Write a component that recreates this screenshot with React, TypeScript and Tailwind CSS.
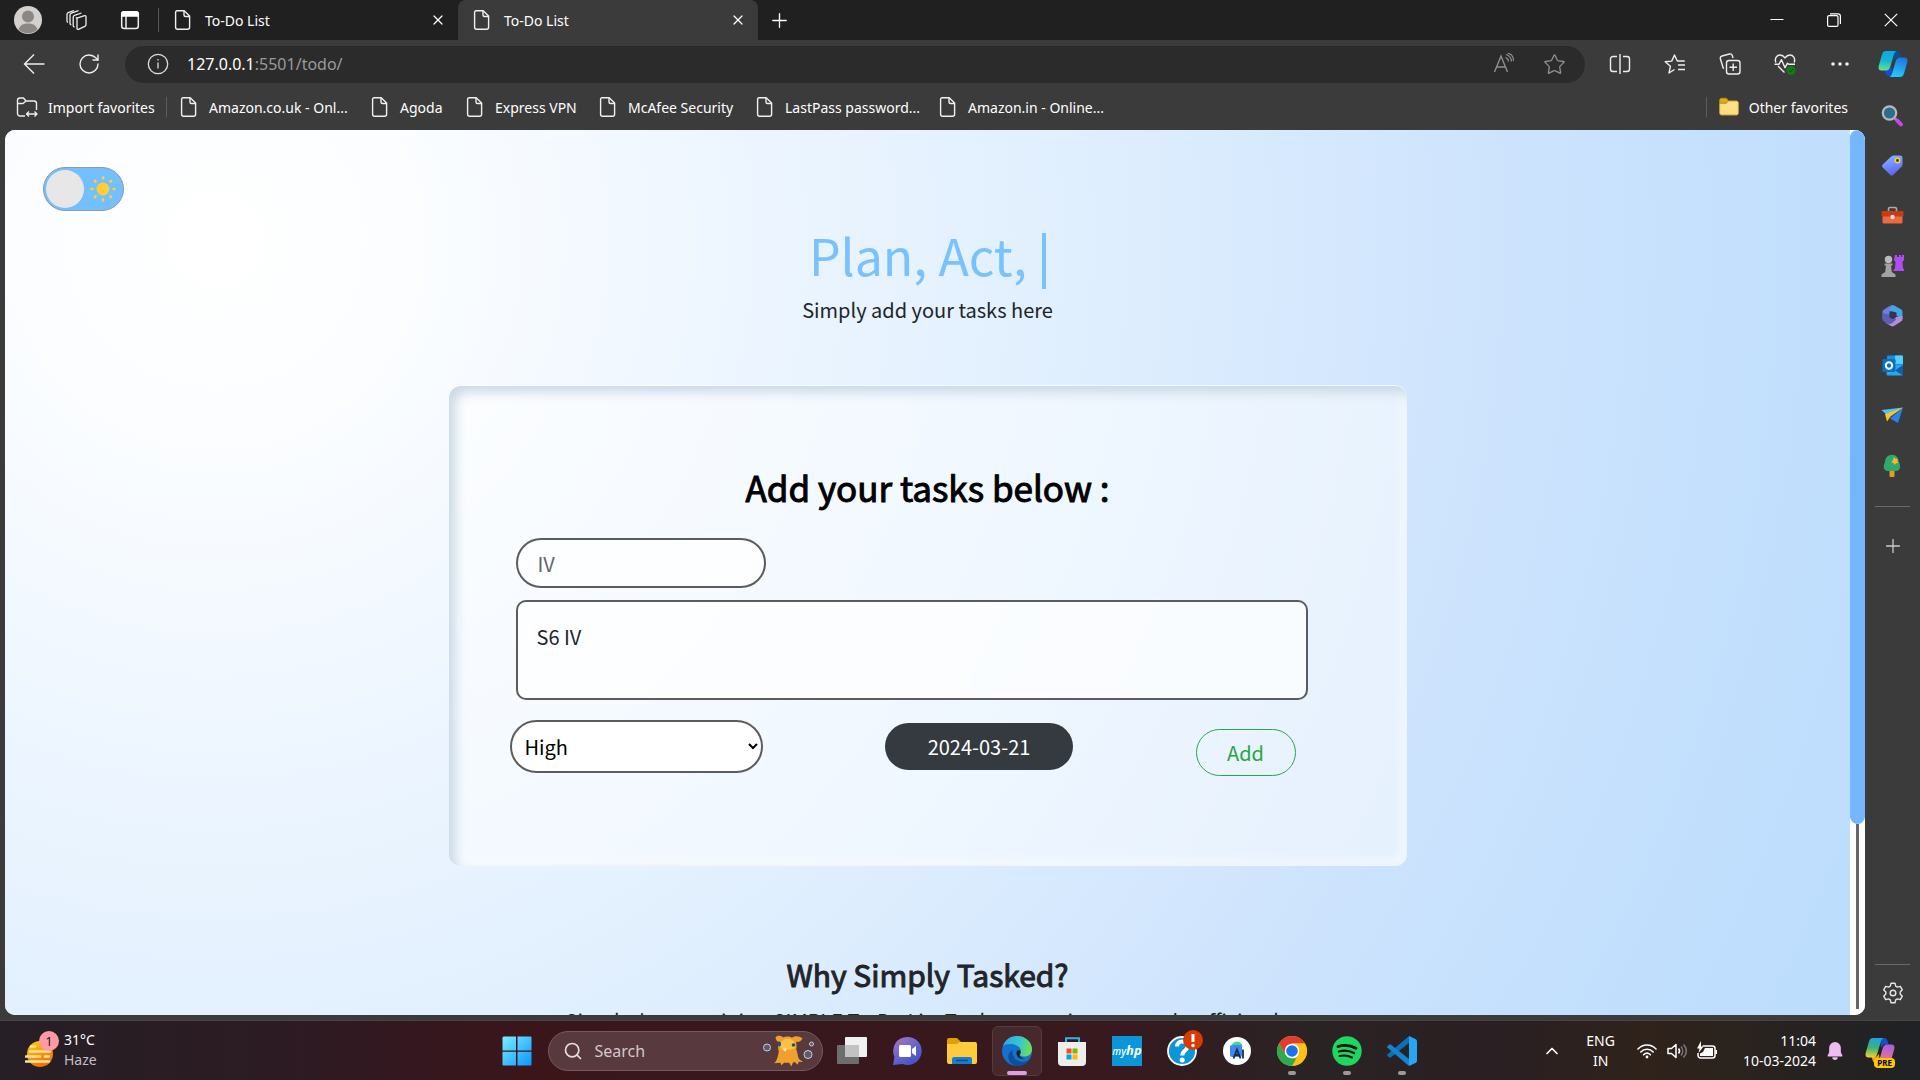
import React from "react";
import {
  ArrowLeft,
  ChevronUp,
  Plus,
  RotateCw,
  Search,
  Star,
  X,
} from "lucide-react";

const svg = (size: number, box = 24) => ({
  width: size,
  height: size,
  viewBox: `0 0 ${box} ${box}`,
  fill: "none",
  "aria-hidden": true,
});

function PageIcon() {
  return (
    <svg {...svg(20, 20)} className="shrink-0" stroke="#f0f0f0" strokeWidth="1.4" strokeLinejoin="round">
      <path d="M4 .8h7.2L16.6 6v11.2a2 2 0 0 1-2 2H4.6a2 2 0 0 1-2-2v-15A1.4 1.4 0 0 1 4 .8Z" />
      <path d="M11 1v4a1.500 1.500 0 0 0 1.500 1.500h4" />
    </svg>
  );
}

/* ---------- tab strip ---------- */

function Tab({ active }: { active?: boolean }) {
  return (
    <div
      className={
        active
          ? "flex h-full w-[300px] items-center rounded-t-lg bg-[#3b3b3b] pl-3.5 pr-2.5"
          : "flex h-full w-[299px] items-center pl-3.5 pr-2.5"
      }
    >
      <PageIcon />
      <span className="ml-3 flex-1 text-[14px]">To-Do List</span>
      <button aria-label="Close tab" className="grid size-5 place-items-center">
        <X size={16} strokeWidth={1.8} />
      </button>
    </div>
  );
}

function TabStrip() {
  return (
    <div className="flex h-10 shrink-0 items-center bg-[#202020] text-white">
      <button aria-label="Profile" className="ml-3.5 shrink-0">
        <svg {...svg(28, 28)}>
          <circle cx="14" cy="14" r="14" fill="#d3d1cf" />
          <circle cx="14" cy="10.500" r="6" fill="#8a8785" />
          <path d="M4.500 23.500C6 19 9.500 17.500 14 17.500s8 1.500 9.500 6A14 14 0 0 1 4.500 23.500Z" fill="#8a8785" />
        </svg>
      </button>
      <button aria-label="Workspaces" className="ml-6 shrink-0">
        <svg {...svg(22, 22)} stroke="#eee" strokeWidth="1.300" strokeLinejoin="round">
          <path d="m11 9.200 7.500-2.500a1 1 0 0 1 1.500 1v7.800a2 2 0 0 1-1.200 1.800l-6.300 3a1 1 0 0 1-1.500-1v-8Z" />
          <path d="M11 9.200 9.800 8.500M8.500 18a1.500 1.500 0 0 1-1.300-1.500V8.300a2 2 0 0 1 1.300-1.900L15.500 4" />
          <path d="M5.300 15.800A1.500 1.500 0 0 1 4 14.300V6a2 2 0 0 1 1.300-1.900L12.500 1.600" />
          <path d="M2 13.500A1.500 1.500 0 0 1 1 12V5.500A2 2 0 0 1 2.200 3.600L8 1.500" />
        </svg>
      </button>
      <button aria-label="Tab actions" className="ml-8 shrink-0">
        <svg {...svg(20, 20)}>
          <rect x="1.700" y="2" width="16.600" height="16.400" rx="2.500" stroke="#eee" strokeWidth="1.500" />
          <path d="M1 6.800V4a3 3 0 0 1 3-3h12a3 3 0 0 1 3 3v2.800Z" fill="#fff" />
          <path d="M6 6v12" stroke="#eee" strokeWidth="1.500" />
        </svg>
      </button>
      <span className="ml-[18px] h-6 w-px bg-[#5a5a5a]" />
      <Tab />
      <Tab active />
      <button aria-label="New tab" className="ml-2.5">
        <Plus size={23} strokeWidth={1.4} />
      </button>
      <div className="ml-auto flex h-full">
        <button aria-label="Minimise" className="grid w-[57px] place-items-center">
          <svg {...svg(14, 14)}><path d="M.5 6.500h13" stroke="#fff" /></svg>
        </button>
        <button aria-label="Restore" className="grid w-[57px] place-items-center">
          <svg {...svg(14, 14)} stroke="#fff" strokeWidth="1.200">
            <rect x=".6" y="2.600" width="10.400" height="10.800" rx="1.500" />
            <path d="M3 .9h8a2.400 2.400 0 0 1 2.400 2.400v7.600" />
          </svg>
        </button>
        <button aria-label="Close window" className="grid w-[58px] place-items-center">
          <svg {...svg(14, 14)} stroke="#fff" strokeWidth="1.200"><path d="m.8.8 12.400 12.400M13.200.8.8 13.200" /></svg>
        </button>
      </div>
    </div>
  );
}

/* ---------- address bar ---------- */

function Toolbar() {
  return (
    <div className="flex h-12 shrink-0 items-center text-[#eee]">
      <button aria-label="Back" className="ml-[23px]">
        <svg {...svg(22, 22)} stroke="#eee" strokeWidth="1.400"><path d="M21.500 11H1.500M11 1.500 1.500 11l9.500 9.500" /></svg>
      </button>
      <button aria-label="Refresh" className="ml-8"><RotateCw size={24} strokeWidth={1.4} /></button>
      <div className="ml-6 mr-4 flex h-[37px] flex-1 items-center rounded-full bg-[#2b2b2b] pl-[22px] pr-[19px]">
        <svg {...svg(22, 22)} className="shrink-0" stroke="#ddd" strokeWidth="1.300">
          <circle cx="11" cy="11" r="9.700" />
          <path d="M11 9.500v6M11 6v1.600" />
        </svg>
        <span className="ml-[18px] flex-1 text-[16px]">
          <span className="text-white">127.0.0.1</span>
          <span className="text-[#9a9a9a]">:5501/todo/</span>
        </span>
        <button aria-label="Read aloud">
          <svg {...svg(22, 22)} stroke="#8f8f8f" strokeWidth="1.400">
            <path d="M1.500 19 8 3l6.500 16M3.600 14h8.800" />
            <path d="M12.500 4.500c2 .8 3 2.200 3 4M13 1.500c3.500 1 5.300 3.500 5.500 7M14.500 0c4 .8 6 4 6 8" strokeWidth="1.200" />
          </svg>
        </button>
        <button aria-label="Add to favorites" className="ml-7 text-[#8f8f8f]"><Star size={23} strokeWidth={1.4} /></button>
      </div>
      <div className="flex items-center gap-[33px] pl-2 pr-[14px]">
        <button aria-label="Split screen">
          <svg {...svg(22, 22)} stroke="#eee" strokeWidth="1.400">
            <path d="M8 3.500H4A2.500 2.500 0 0 0 1.500 6v10A2.500 2.500 0 0 0 4 18.500h4M14 3.500h4A2.500 2.500 0 0 1 20.500 6v10a2.500 2.500 0 0 1-2.500 2.500h-4M11 1v20" />
          </svg>
        </button>
        <button aria-label="Favorites">
          <svg {...svg(22, 22)} stroke="#eee" strokeWidth="1.400" strokeLinejoin="round">
            <path d="M10.500 16.500 5 20l1.400-6.700L1.200 8.800l6.500-.7L10.500 2l2.800 6h7.500M14 12h7M14 16.500h7" />
          </svg>
        </button>
        <button aria-label="Collections">
          <svg {...svg(22, 22)} stroke="#eee" strokeWidth="1.400">
            <rect x="7.500" y="7.500" width="13.500" height="13.500" rx="2.500" />
            <path d="M14.200 10.500v7.500M10.500 14.200H18M5 15.500l-.8-.5L1.300 5.500A2.300 2.300 0 0 1 3 3l7.500-2a2.300 2.300 0 0 1 2.800 1.500l.7 2.500" />
          </svg>
        </button>
        <button aria-label="Browser essentials">
          <svg {...svg(22, 22)} stroke="#eee" strokeWidth="1.400">
            <path d="M1.800 9.500C.3 5 3 2 6 2c2.200 0 3.700 1 5 2.800C12.300 3 13.800 2 16 2c3 0 5.700 3 4.200 7.500M4 13l6.500 6.500" />
            <path d="M.5 11.200H5l2.500-4.500 3.500 8 2.500-4.500 1.200 1H21" strokeLinejoin="round" />
            <circle cx="17" cy="17.500" r="4.500" fill="#107c10" stroke="none" />
            <path d="m15 17.600 1.400 1.400 2.600-2.700" stroke="#2b2b2b" strokeWidth="1" />
          </svg>
        </button>
        <button aria-label="More">
          <svg {...svg(22, 22)}>
            <g fill="#eee"><circle cx="4" cy="11" r="1.800" /><circle cx="11" cy="11" r="1.800" /><circle cx="18" cy="11" r="1.800" /></g>
          </svg>
        </button>
      </div>
    </div>
  );
}

/* ---------- favorites bar ---------- */

const favorites = [
  { label: "Amazon.co.uk - Onl...", width: "w-[191px]" },
  { label: "Agoda", width: "w-[95px]" },
  { label: "Express VPN", width: "w-[133px]" },
  { label: "McAfee Security", width: "w-[157px]" },
  { label: "LastPass password...", width: "w-[183px]" },
  { label: "Amazon.in - Online...", width: "w-[190px]" },
];

function FavoritesBar() {
  return (
    <nav className="flex h-[42px] shrink-0 items-center pb-1 text-[14px] whitespace-nowrap text-white">
      <a href="#" className="ml-4 flex w-[150px] items-center gap-2.5">
        <svg {...svg(22, 22)} className="shrink-0" stroke="#eee" strokeWidth="1.400" strokeLinejoin="round">
          <path d="M9 20H4a2.500 2.500 0 0 1-2.500-2.500V4.500A2.500 2.500 0 0 1 4 2h3.500l2.500 3h8a2.500 2.500 0 0 1 2.500 2.500V14M1.500 7.500H7L10 5" />
          <path d="M10.500 18h10.500M13 15.500 10.500 18l2.500 2.500M18.500 15.500 21 18l-2.500 2.500" />
        </svg>
        Import favorites
      </a>
      <span className="mr-3 h-5 w-px bg-[#5c5c5c]" />
      {favorites.map((f) => (
        <a key={f.label} href="#" className={`flex items-center gap-2.5 ${f.width}`}>
          <PageIcon />
          {f.label}
        </a>
      ))}
      <span className="ml-auto mr-3 h-5 w-px bg-[#5c5c5c]" />
      <a href="#" className="mr-[17px] flex items-center gap-2.5">
        <svg {...svg(20, 20)} className="shrink-0">
          <path d="M.7 3.200C.7 2 1.500 1.300 2.500 1.300h4.800l1.900 2.200L7.300 6H.7Z" fill="#e0ac1c" stroke="#c08e0c" />
          <path d="M.7 6.500h6.500l2-2.500h8.300c1 0 1.800.8 1.800 1.800v10.400c0 1-.8 1.800-1.800 1.800H2.500c-1 0-1.800-.8-1.800-1.800Z" fill="#ffdf85" stroke="#d3a02a" />
        </svg>
        Other favorites
      </a>
    </nav>
  );
}

/* ---------- edge sidebar ---------- */

function Copilot({ size, warm }: { size: number; warm?: boolean }) {
  const id = warm ? "w" : "c";
  return (
    <svg {...svg(size, 30)}>
      <defs>
        <linearGradient id={`${id}1`} x1="8" y1="1" x2="6" y2="22" gradientUnits="userSpaceOnUse">
          <stop stopColor={warm ? "#1ca0ee" : "#12a5ec"} />
          <stop offset=".5" stopColor={warm ? "#3bb27a" : "#13b6d0"} />
          <stop offset="1" stopColor={warm ? "#ffd02b" : "#6be48e"} />
        </linearGradient>
        <linearGradient id={`${id}2`} x1="26" y1="8" x2="20" y2="29" gradientUnits="userSpaceOnUse">
          <stop stopColor={warm ? "#a25bf0" : "#1f6fe0"} />
          <stop offset="1" stopColor={warm ? "#ff7d6b" : "#21d0fb"} />
        </linearGradient>
      </defs>
      <path d="M15 2h4c2 0 3 1 3.600 3l1 3.500h-5L16 12Z" fill={warm ? "#1a4fc4" : "#08518f"} />
      <path d="M15 27h-4c-2 0-3-1-3.500-3l-1-3.500h5L14 18Z" fill={warm ? "#f0a020" : "#1a48dc"} />
      <path d="M8 2h10.500c-1.500.8-2.300 2-2.800 4L12.500 17c-.8 3-2 4.500-4.500 4.500H3.500C1 21.500 0 19.500.7 17L4 5.500C4.700 3 6 2 8 2Z" fill={`url(#${id}1)`} />
      <path d="M22 28H11.500c1.500-.8 2.300-2 2.800-4L17.500 13c.8-3 2-4.500 4.500-4.500h4.500c2.500 0 3.500 2 2.800 4.500L26 24.500C25.300 27 24 28 22 28Z" fill={`url(#${id}2)`} />
    </svg>
  );
}

const sidebarApps: { name: string; art: React.ReactNode }[] = [
  {
    name: "Search",
    art: (
      <>
        <circle cx="8.500" cy="9" r="6.700" fill="#2b6d8f" stroke="#b9b9b9" strokeWidth="2.200" />
        <path d="m13.500 14 3 3" stroke="#999" strokeWidth="2.500" />
        <path d="m16.500 16.800 3.500 3.500" stroke="#c944f4" strokeWidth="4" strokeLinecap="round" />
      </>
    ),
  },
  {
    name: "Shopping",
    art: (
      <>
        <defs>
          <linearGradient id="tag" x1="8" y1="3" x2="14" y2="22" gradientUnits="userSpaceOnUse">
            <stop stopColor="#7fb2ff" /><stop offset="1" stopColor="#5a5af4" />
          </linearGradient>
        </defs>
        <path d="M12.500 1.500H19a2.500 2.500 0 0 1 2.500 2.500v6.500a3 3 0 0 1-1 2.200l-8.400 8.300a2 2 0 0 1-2.800 0l-7.600-7.500a2 2 0 0 1 0-2.900l8-7.700A4 4 0 0 1 12.500 1.500Z" fill="url(#tag)" />
        <circle cx="16.500" cy="6.500" r="2.200" fill="#333" stroke="#ffd21f" strokeWidth="1.500" />
      </>
    ),
  },
  {
    name: "Tools",
    art: (
      <>
        <path d="M7.500 7V5a1.500 1.500 0 0 1 1.500-1.500h5A1.500 1.500 0 0 1 15.500 5v2" stroke="#aaa" strokeWidth="1.600" />
        <rect x="1.500" y="9" width="20" height="10.500" rx="1.500" fill="#ee6840" />
        <rect x=".5" y="7" width="22" height="5.500" rx="1" fill="#c83c14" />
        <circle cx="11.500" cy="13" r="2.200" fill="#ddd" />
      </>
    ),
  },
  {
    name: "Games",
    art: (
      <>
        <path d="M14 1h2v2h2V1h2v2h1V1h2v5l-1.500 2 .5 6 2 3H12l2-3 .5-6L13 6Z" fill="#b14df0" />
        <circle cx="7.500" cy="5.500" r="3.700" fill="#bbb" />
        <path d="M3.500 9.500h8v2H10l.8 6.500 3.700 2.500V23H.5v-2.500L4.200 18 5 11.500H3.500Z" fill="#a3a3a3" />
      </>
    ),
  },
  {
    name: "Microsoft 365",
    art: (
      <>
        <path d="M9.500 1.500 3 5.500a3 3 0 0 0-1.500 2.600V15c2 2 5 1 7-1V7.500l7-4.500-2.500-1.500a3.500 3.500 0 0 0-3.500 0Z" fill="#6f7be8" />
        <path d="m13 1.500 7 3.800A3 3 0 0 1 21.500 8v7c-2-1-4-2-6-3.500V8.500L8.500 7c0-3 2-5 4.500-5.500Z" fill="#3fa6ea" />
        <path d="M21.500 12v3a3 3 0 0 1-1.500 2.600l-7 4.400a3 3 0 0 1-3 0l-6-3.500c5 1 7-1 11-5.500Z" fill="#b48be0" />
        <path d="M1.500 9v6a3 3 0 0 0 1.500 2.600l4 2.300c3.500.5 6-2 8.500-5L8.500 14 8 10.500Z" fill="#5c5fb8" />
        <path d="m8.500 9.500 3-2 3.500 1.500v4l-3 2-3.500-1.500Z" fill="#303846" />
      </>
    ),
  },
  {
    name: "Outlook",
    art: (
      <>
        <rect x="6" y="1.500" width="16" height="17" rx="1" fill="#1490df" />
        <path d="M14 1.500h7a1 1 0 0 1 1 1V10h-8Z" fill="#50d1ff" />
        <path d="M6 11h16v9a1.500 1.500 0 0 1-1.500 1.500H7A1.500 1.500 0 0 1 5.500 20Z" fill="#28a8ea" />
        <path d="m22 11-8 5.500 8 5Z" fill="#0f5fa8" />
        <rect x="1.500" y="5" width="13" height="13" rx="1.300" fill="#0a70c4" />
        <circle cx="8" cy="11.500" r="3.200" stroke="#fff" strokeWidth="2" />
      </>
    ),
  },
  {
    name: "Drop",
    art: (
      <>
        <path d="M.5 6 22 3.500 8 13Z" fill="#4ec1f5" />
        <path d="M22 3.500 17 19l-8-4.500Z" fill="#2b83e8" />
        <path d="M4 10 22 3.500 9.500 12.500 6 17.500Z" fill="#f9c32c" />
      </>
    ),
  },
  {
    name: "Tree",
    art: (
      <>
        <rect x="8.500" y="16" width="5" height="7" rx="1" fill="#e89a1c" />
        <path d="M11 .8c5 0 6.500 4.200 7 7.700 1.800 2.500 1.800 8.500-3 8.500H7c-4.800 0-5-5.500-3.200-8C4 5 6 .8 11 .8Z" fill="#2fa872" />
        <path d="m13 3 1.500 1.800 2.300-.1-.6 2.300 1.300 2-2.400.3-1.600 1.700-1-2-2.300-.8 1.500-1.800Z" fill="#ffb91f" />
      </>
    ),
  },
];

function Sidebar() {
  return (
    <aside className="flex w-[55px] shrink-0 flex-col items-center text-[#ccc]">
      <button aria-label="Copilot" className="grid h-12 place-items-center"><Copilot size={30} /></button>
      <div className="mt-0.5 flex w-full flex-col">
        {sidebarApps.map((a) => (
          <button key={a.name} aria-label={a.name} className="grid h-[50px] w-full place-items-center">
            <svg {...svg(23, 23)}>{a.art}</svg>
          </button>
        ))}
      </div>
      <span className="mt-4 h-px w-[35px] shrink-0 bg-[#6a6a6a]" />
      <button aria-label="Customise" className="mt-7"><Plus size={22} strokeWidth={1.4} /></button>
      <span className="mt-auto h-px w-[35px] shrink-0 bg-[#6a6a6a]" />
      <button aria-label="Settings" className="mt-[17px] mb-4">
        <svg {...svg(22, 22)} stroke="#e6e6e6" strokeWidth="1.400" strokeLinejoin="round">
          <path d="M9 1.200h4l.7 2.900 1.700 1 2.900-.8 2 3.500-2.100 2.100v2.200l2.100 2.100-2 3.500-2.900-.8-1.700 1-.7 2.900H9l-.7-2.900-1.700-1-2.900.8-2-3.500 2.100-2.100V9.900L1.700 7.800l2-3.500 2.900.8 1.700-1Z" />
          <circle cx="11" cy="11" r="2.800" />
        </svg>
      </button>
    </aside>
  );
}

/* ---------- web page ---------- */

function ThemeToggle() {
  return (
    <label className="flex h-11 w-[81px] items-center rounded-full border border-[#8f9aa6] bg-[#73bfff] px-0.5">
      <input type="checkbox" aria-label="Dark mode" className="size-[38px] shrink-0 appearance-none rounded-full bg-[#e7e7e7]" />
      <svg {...svg(26, 26)} className="ml-1.5" stroke="#ffcf33" strokeWidth="2.600" strokeLinecap="round">
        <circle cx="13" cy="13" r="6.500" fill="#ffcf33" stroke="none" />
        <path d="M13 1.500v1M13 23.500v1M1.500 13h1M23.500 13h1M5 5l.6.6M20.400 20.400l.6.6M5 21l.6-.6M20.400 5.600l.6-.6" />
      </svg>
    </label>
  );
}

function TaskCard() {
  return (
    <form className="mt-[61px] flex h-[480px] w-[958px] max-w-full flex-col rounded-[12px] bg-white/50 pr-[99px] pl-[67px] shadow-[inset_6px_6px_12px_#c8d8e6,inset_-6px_-6px_10px_#ffffff88,0_-1px_0_#ffffffaa]">
      <h2 className="mt-[75px] ml-8 text-center text-[35px] leading-[52px] text-black [-webkit-text-stroke:1px_black]">
        Add your tasks below :
      </h2>
      <input
        aria-label="Task title"
        defaultValue="IV"
        className="mt-[25px] h-[50px] w-[250px] rounded-full border-2 border-[#5c5c5c] bg-white/70 px-5 text-[20px] text-[#5f666d]"
      />
      <textarea
        aria-label="Task description"
        defaultValue="S6 IV"
        className="mt-3 h-[100px] w-full resize-none rounded-[10px] border-2 border-[#5c5c5c] bg-white/70 px-[19px] py-5 text-[20px] leading-[30px] text-[#212529]"
      />
      <div className="mt-5 -ml-1.5 flex items-start justify-between pr-3">
        <select
          aria-label="Priority"
          defaultValue="High"
          className="h-[53px] w-[253px] rounded-full border-2 border-[#5c5c5c] bg-white pl-[9px] text-[20px] text-black"
        >
          <option>High</option>
          <option>Medium</option>
          <option>Low</option>
        </select>
        <button type="button" className="mt-[3px] h-[47px] w-[188px] rounded-full bg-[#343a40] text-[20px] text-white">
          2024-03-21
        </button>
        <button type="button" className="mt-[9px] h-[47px] w-[100px] rounded-full border border-[#28a745] text-[20px] text-[#28a745]">
          Add
        </button>
      </div>
    </form>
  );
}

function WebPage() {
  return (
    <div className="ml-[5px] flex min-h-0 flex-1 overflow-hidden rounded-[10px] bg-white font-['Noto_Sans_CJK_JP',sans-serif]">
      <main className="flex min-w-0 flex-1 flex-col bg-[radial-gradient(circle_at_210px_110px,#ffffff_0px,#fbfdff_200px,#eef6ff_500px,#e0effe_860px,#cfe4fd_1250px,#c1dffd_1600px,#b9dbfd_1950px)] px-[38px]">
        <div className="mt-[37px]"><ThemeToggle /></div>
        <div className="flex flex-col items-center text-[#212529]">
          <h1 className="mt-2 flex items-center text-[50px] leading-[70px] whitespace-pre text-[#78c3ff]">
            {"Plan, Act, "}
            <span className="mt-3.5 ml-1 h-[56px] w-1 bg-[#78c3ff]" />
          </h1>
          <p className="mt-1.5 text-[20px] leading-[30px]">Simply add your tasks here</p>
          <TaskCard />
          <h2 className="mt-[84px] text-[30px] leading-[48px] [-webkit-text-stroke:1px_#212529]">Why Simply Tasked?</h2>
          <p className="mt-2 text-[20px] leading-[30px] whitespace-nowrap">
            Simply, because it is a SIMPLE To-Do List Tool to organise your tasks efficiently
          </p>
        </div>
      </main>
      <div className="flex w-[15px] shrink-0 flex-col items-center bg-white pb-1.5">
        <div className="h-[79%] w-full shrink-0 rounded-full bg-[#74b7ff]" />
        <div className="w-[3px] flex-1 bg-[#666]" />
      </div>
    </div>
  );
}

/* ---------- taskbar ---------- */

const taskApps: { name: string; running?: boolean; active?: boolean; art: React.ReactNode }[] = [
  {
    name: "Task view",
    art: (
      <>
        <rect y="9" width="22" height="19" rx="1" fill="#6d6d6d" />
        <rect x="8" y="1" width="22" height="20" rx="1" fill="#f0f0f0" />
        <path d="M8 9h14v12H8Z" fill="#c2c2c2" />
      </>
    ),
  },
  {
    name: "Chat",
    art: (
      <>
        <defs>
          <linearGradient id="chat" x1="5" y1="3" x2="22" y2="26" gradientUnits="userSpaceOnUse">
            <stop stopColor="#9c75bd" /><stop offset=".6" stopColor="#5f63cf" /><stop offset="1" stopColor="#4b53c4" />
          </linearGradient>
        </defs>
        <path d="M15.500 1a14 14 0 1 1-5 27L1 29l1.500-8A14 14 0 0 1 15.500 1Z" fill="url(#chat)" />
        <rect x="7" y="9" width="12" height="12" rx="1.500" fill="#fff" />
        <path d="m20 13 4-3v10l-4-3Z" fill="#fff" />
      </>
    ),
  },
  {
    name: "File Explorer",
    art: (
      <>
        <path d="M0 4a2 2 0 0 1 2-2h8l4 4h15v8H0Z" fill="#e0a000" />
        <path d="M0 8h10l3-2h15a2 2 0 0 1 2 2v18a2 2 0 0 1-2 2H2a2 2 0 0 1-2-2Z" fill="#ffcb3d" />
        <path d="M5 28v-5a2 2 0 0 1 2-2h16a2 2 0 0 1 2 2v5Z" fill="#1380d4" />
        <path d="M9 24.500h12" stroke="#0a4f8e" strokeWidth="1.500" />
      </>
    ),
  },
  {
    name: "Edge",
    active: true,
    art: (
      <>
        <defs>
          <linearGradient id="eg" x1="2" y1="6" x2="29" y2="14" gradientUnits="userSpaceOnUse">
            <stop stopColor="#2fa6e8" /><stop offset=".5" stopColor="#38c4d4" /><stop offset="1" stopColor="#6be250" />
          </linearGradient>
        </defs>
        <circle cx="15" cy="15" r="15" fill="#1272cc" />
        <path d="M1 10C3 4 8 0 15 0c9 0 15 6.500 15 13 0 5-3.500 7.500-7.500 7.500-3 0-5-1-4.500-2.500 2-3 .5-7-3.500-8.500C9.500 7 3.500 8 1 10Z" fill="url(#eg)" />
        <path d="M10.500 16c0 6 5 10 10 10 3 0 5.500-1 7.500-3-2.500 4.500-7.500 7-13 7-6-1-9.500-6-8.500-11 .5-2.500 2-4 4-5Z" fill="#0c4f9c" />
        <path d="M14.500 16.500c0-2 1.500-2.500 3.500-2 1 1.500.8 3-.5 4.200-.5 1.800 1.500 3.300 5 3.300-5 2-8-1.500-8-5.500Z" fill="#2a191d" />
      </>
    ),
  },
  {
    name: "Store",
    art: (
      <>
        <path d="M9 7V2.200h13V7" stroke="#2cb6f0" strokeWidth="2" />
        <path d="M1 6h28v20a4 4 0 0 1-4 4H5a4 4 0 0 1-4-4Z" fill="#eee" />
        <path d="M9.500 12.500h5v5h-5Z" fill="#f25022" /><path d="M15.500 12.500h5v5h-5Z" fill="#7fba00" />
        <path d="M9.500 18.500h5v5h-5Z" fill="#00a4ef" /><path d="M15.500 18.500h5v5h-5Z" fill="#ffb900" />
      </>
    ),
  },
  { name: "myHP", art: null },
  {
    name: "HP Support",
    art: (
      <>
        <circle cx="15" cy="15" r="14" fill="#0a96d8" stroke="#fff" strokeWidth="1.800" />
        <path d="M10 10.500c0-3 2-5 5.300-5s5.400 1.800 5.400 4.600c0 4.600-5.400 4.400-5.400 9.400" stroke="#fff" strokeWidth="4" />
        <circle cx="15.200" cy="24" r="2.500" fill="#fff" />
        <circle cx="26" cy="4" r="10" fill="#d83b01" />
        <path d="M26-2v8" stroke="#fff" strokeWidth="3" /><circle cx="26" cy="9.500" r="1.700" fill="#fff" />
      </>
    ),
  },
  {
    name: "Android Studio",
    art: (
      <>
        <circle cx="15" cy="15" r="14" fill="#fff" />
        <path d="M9.500 11a5.500 5.500 0 0 1 11 0Z" fill="#3ddc84" />
        <rect x="8" y="9" width="12" height="12" rx="2" fill="#4285f4" />
        <path d="m11.500 22.500 3.500-9 3.500 9M13 19h4M21 13.500v9" stroke="#12304f" strokeWidth="1.800" />
      </>
    ),
  },
  {
    name: "Chrome",
    running: true,
    art: (
      <>
        <circle cx="15" cy="15" r="15" fill="#fbc116" />
        <path d="M2 7.500a15 15 0 0 1 26 0H15L8.500 18.700Z" fill="#e33b2e" />
        <path d="M2 7.500 8.500 18.700 15 22.500h6.500L15 30A15 15 0 0 1 2 7.500Z" fill="#2da94f" />
        <path d="M21.500 18.700 15 30A15 15 0 0 0 28 7.500H15Z" fill="#fbc116" />
        <circle cx="15" cy="15" r="7.300" fill="#fff" /><circle cx="15" cy="15" r="5.800" fill="#1a73e8" />
      </>
    ),
  },
  {
    name: "Spotify",
    running: true,
    art: (
      <>
        <circle cx="15" cy="15" r="14.700" fill="#1ed760" />
        <path d="M6 10.500c6-1.800 12.500-1.300 18 1.800" stroke="#131313" strokeWidth="2.800" strokeLinecap="round" />
        <path d="M7 15.500c5-1.400 10.500-.9 15 1.600" stroke="#131313" strokeWidth="2.300" strokeLinecap="round" />
        <path d="M7.500 20c4.500-1.100 8.500-.7 12.500 1.500" stroke="#131313" strokeWidth="2" strokeLinecap="round" />
      </>
    ),
  },
  {
    name: "VS Code",
    running: true,
    art: (
      <>
        <path d="M22 7 3 22l-2.500-2.200a1 1 0 0 1 0-1.500L22 0Z" fill="#0c6fb8" />
        <path d="M22 23 3 8 .5 10.200a1 1 0 0 0 0 1.500L22 30Z" fill="#1484d0" />
        <path d="m22 0 6.500 3A2.500 2.500 0 0 1 30 5.300v19.400a2.500 2.500 0 0 1-1.500 2.300L22 30Z" fill="#27a6f2" />
      </>
    ),
  },
];

function SearchCritter() {
  return (
    <svg width="52" height="32" viewBox="0 0 52 32" fill="none" aria-hidden="true">
      <path d="M13.500 2.500C15 0 19 .5 21.500 2.500c2-1.300 6.500-1.300 8.500.3C32.500.8 37 .6 40.500 3.500c-1.500 3-4 3.700-6.500 3.300.8 2.500.7 5 .2 7.500 1.600 3.500 1.300 7 2.800 9.700l4 3-4.300-.3-1 3-3-2.700-1.700.5-1.800 4-2-3.700h-5l-3 2.500-.7-2.500-6.500.5c3.500-2.500 3.800-7.500 4.800-11.500-1-3.500-.8-7 .5-10-2 .2-3.500-1.500-3.800-4.300Z" fill="#f0a02c" />
      <path d="M18 12c0-5 4-8.500 8-8.500s7.500 3.500 7.500 8.500c-1.500 3.500-13.500 4-15.500 0Z" fill="#fbc24a" />
      <path d="m20.500 14 4-1-1 4Z" fill="#fff0a8" />
      <ellipse cx="17.500" cy="9" rx="1.500" ry="2.500" fill="#21506b" /><circle cx="31.500" cy="10" r="1.800" fill="#21506b" />
      <circle cx="5" cy="12.500" r="3.500" fill="#5e5a66" stroke="#b9d8d2" />
      <circle cx="46" cy="19.500" r="4" fill="#5e5a66" stroke="#c8d6e2" />
      <circle cx="49.500" cy="9" r="2" fill="#5e5a66" stroke="#b9d8d2" />
    </svg>
  );
}

function Taskbar() {
  return (
    <footer className="flex h-[60px] shrink-0 items-center border-t border-[#4a4245] bg-[linear-gradient(90deg,#261f25_0%,#2d1b23_15%,#35171f_22%,#3a161b_27%,#37191e_58%,#2a2324_68%,#2a1f22_78%,#2f231b_86%,#202225_100%)] text-white">
      <div className="flex flex-1 items-center pl-[25px]">
        <button aria-label="Weather" className="flex items-center gap-[5px] text-left">
          <svg width="34" height="38" viewBox="0 0 34 38" fill="none" className="mb-1" aria-hidden="true">
            <defs><linearGradient id="sun" x1="8" y1="10" x2="20" y2="36" gradientUnits="userSpaceOnUse"><stop stopColor="#ffd000" /><stop offset="1" stopColor="#f06a00" /></linearGradient></defs>
            <circle cx="15" cy="24" r="13" fill="url(#sun)" />
            <path d="M6 16.500h4M5 21.500h20M1 26.500h14M20 26.500h4M1 31.500h23" stroke="#f5dfa8" strokeWidth="2.600" strokeLinecap="round" />
            <circle cx="24" cy="11" r="10" fill="#ff99a4" />
            <text x="24" y="16" textAnchor="middle" fontSize="13" fill="#1a1a1a">1</text>
          </svg>
          <span className="mb-0.5 text-[14px] leading-5">
            <span className="block">31°C</span>
            <span className="block text-[#c4bdc0]">Haze</span>
          </span>
        </button>
      </div>

      <div className="mr-3.5 flex items-center">
        <button aria-label="Start" className="mr-4">
          <svg {...svg(30, 30)}>
            <defs><linearGradient id="win" x1="0" y1="0" x2="30" y2="30" gradientUnits="userSpaceOnUse"><stop stopColor="#7cf0ff" /><stop offset="1" stopColor="#0a93ff" /></linearGradient></defs>
            <path d="M1.500.5H14v14H.5v-13ZM15.500.5h13a1 1 0 0 1 1 1v13h-14ZM.5 15.800H14v13.700H1.500a1 1 0 0 1-1-1ZM15.500 15.800h14v12.700a1 1 0 0 1-1 1h-13Z" fill="url(#win)" />
          </svg>
        </button>
        <label className="flex h-10 w-[275px] items-center rounded-full border border-[#75595d] bg-[#57393e] pr-2 pl-[14px]">
          <Search size={20} strokeWidth={2} className="shrink-0 text-[#e4dcdd]" />
          <input
            aria-label="Search"
            placeholder="Search"
            className="ml-3 min-w-0 flex-1 bg-transparent text-[16px] placeholder:text-[#d3c9ca]"
          />
          <SearchCritter />
        </label>
        <div className="ml-0.5 flex">
          {taskApps.map((a) => (
            <button key={a.name} aria-label={a.name} className="grid h-[50px] w-[55px] place-items-center">
              <span
                className={
                  a.active
                    ? "flex h-[50px] w-[50px] flex-col items-center rounded-md border border-[#553c41] bg-[#46282d] pt-[9px]"
                    : "flex h-[50px] w-[50px] flex-col items-center pt-2.5"
                }
              >
                {a.art ? (
                  <svg {...svg(30, 30)} className="shrink-0 overflow-visible">{a.art}</svg>
                ) : (
                  <span className="grid size-[30px] place-items-center bg-[#0a96d8] leading-none italic">
                    <span className="text-[10px] font-medium">my<span className="text-[13px] font-bold">hp</span></span>
                  </span>
                )}
                {a.active && <span className="mt-[5px] h-1 w-5 rounded-full bg-[#dd9fe4]" />}
                {a.running && <span className="mt-[5px] h-1 w-2 rounded-full bg-[#9d9899]" />}
              </span>
            </button>
          ))}
        </div>
      </div>

      <div className="flex flex-1 items-center justify-end text-[14px] leading-5">
        <button aria-label="Hidden icons"><ChevronUp size={20} strokeWidth={2} /></button>
        <button className="ml-6 text-center">ENG<br />IN</button>
        <button aria-label="Network, sound, battery" className="ml-[22px] flex items-center gap-2.5">
          <svg {...svg(20, 20)} stroke="#fff" strokeWidth="1.600" strokeLinecap="round">
            <path d="M1 8c5-5.300 13-5.300 18 0M3.800 11c3.500-3.600 8.900-3.600 12.400 0M6.600 13.800c2-2 4.800-2 6.800 0" />
            <circle cx="10" cy="16" r="1.400" fill="#fff" stroke="none" />
          </svg>
          <svg {...svg(20, 20)} stroke="#fff" strokeWidth="1.500" strokeLinejoin="round">
            <path d="M1 7.500h3.500L9 3.500v13l-4.500-4H1Z" />
            <path d="M11.500 7.500c1.300 1.500 1.300 3.500 0 5" />
            <path d="M14 5.500c2.300 2.600 2.300 6.400 0 9M16.500 3.500c3.500 4 3.500 9 0 13" stroke="#777" />
          </svg>
          <svg {...svg(20, 20)}>
            <path d="M5.500 5h10A2.500 2.500 0 0 1 18 7.500v7a2.500 2.500 0 0 1-2.500 2.500h-12A2.500 2.500 0 0 1 1 14.500V12" stroke="#fff" strokeWidth="1.500" />
            <path d="M8 7h8v8H3v-2.500L6 11Z" fill="#fff" /><path d="M18.500 9h1.500v4h-1.500Z" fill="#fff" />
            <path d="M4 0 0 7.500h2.500L1.500 12 6.500 5.500H4Z" fill="#fff" />
          </svg>
        </button>
        <button className="ml-[26px] text-right">11:04<br />10-03-2024</button>
        <button aria-label="Notifications" className="ml-2.5">
          <svg {...svg(18, 20)}>
            <path fill="#edbdf2" d="M10 0a6.500 6.500 0 0 1 6.500 6.500v5l1.700 3.500a.7.700 0 0 1-.7 1h-15a.7.700 0 0 1-.7-1l1.700-3.500v-5A6.500 6.500 0 0 1 10 0ZM7 17h6a3 3 0 0 1-6 0Z" />
          </svg>
        </button>
        <button aria-label="Copilot preview" className="relative mr-[25px] ml-[21px]">
          <Copilot size={30} warm />
          <span className="absolute right-0 -bottom-0.5 rounded-sm bg-[#ffc800] px-[3px] text-[8px] leading-[10px] font-bold text-black">PRE</span>
        </button>
      </div>
    </footer>
  );
}

export default function App() {
  return (
    <div className="flex h-screen flex-col overflow-hidden bg-[#3b3b3b] font-['Noto_Sans',sans-serif]">
      <TabStrip />
      <div className="flex min-h-0 flex-1">
        <div className="flex min-w-0 flex-1 flex-col pb-[5px]">
          <Toolbar />
          <FavoritesBar />
          <WebPage />
        </div>
        <Sidebar />
      </div>
      <Taskbar />
    </div>
  );
}
